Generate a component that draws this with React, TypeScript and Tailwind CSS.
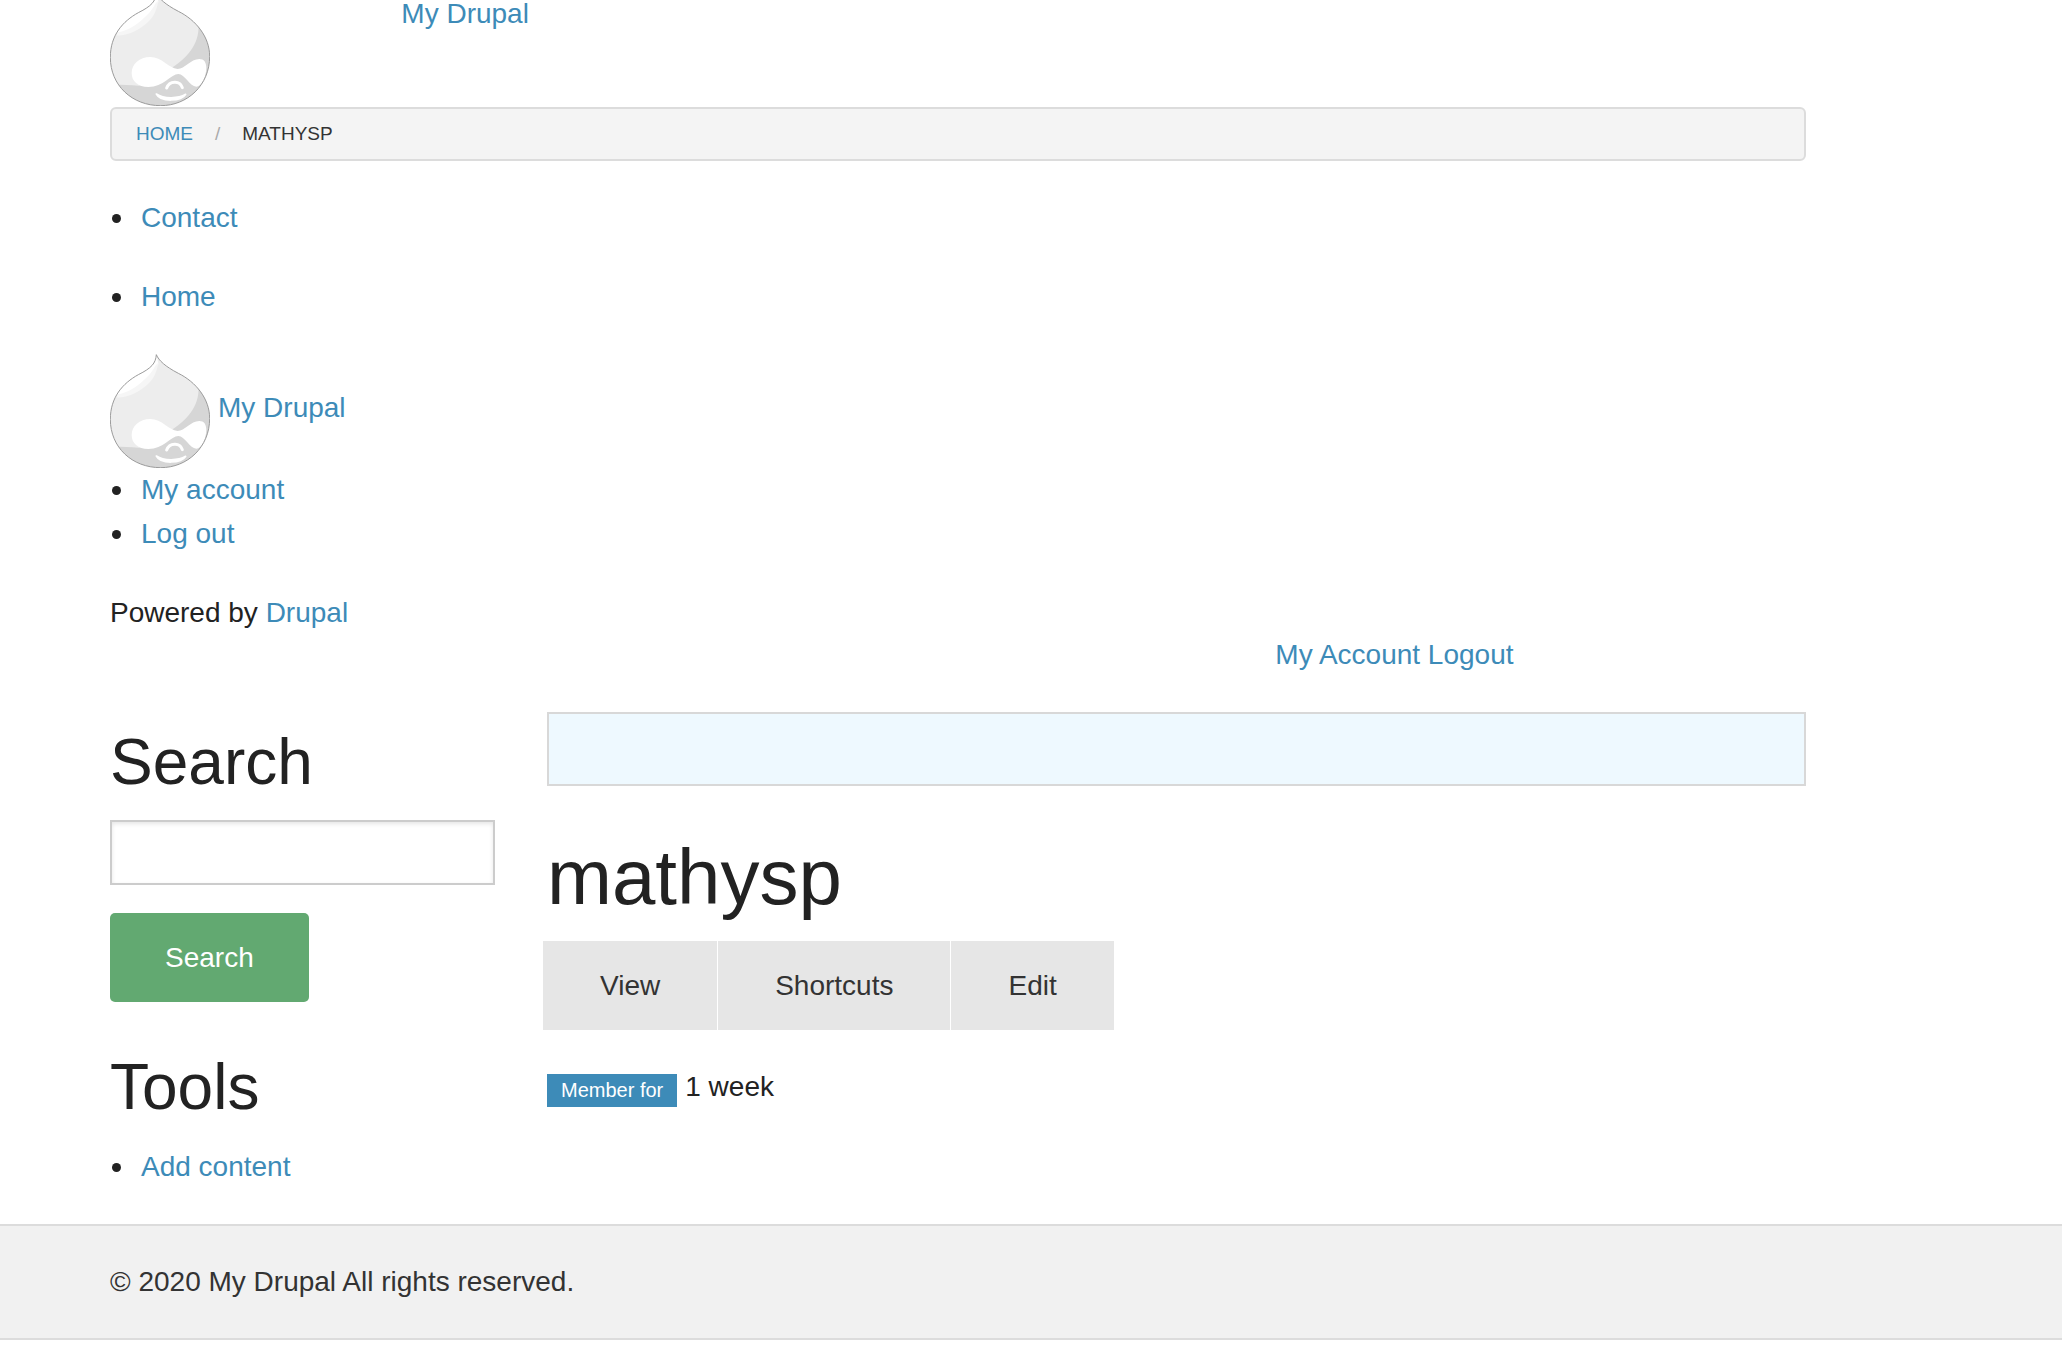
import React from 'react';

const linkClass = 'text-[#3d8bb8] hover:text-[#2b7aa6]';

const dropPath =
  'M139 2C147 20 165 37 205 58C258 84 299 135 299 193C299 280 232 341 152 341C66 341 1 280 1 196C1 130 38 88 85 62C125 42 137 28 139 2Z';

function DropLogo({ id }: { id: string }) {
  return (
    <svg viewBox="0 0 300 342" className="w-[100px] h-[114px] shrink-0" role="img" aria-label="Home">
      <defs>
        <clipPath id={id}>
          <path d={dropPath} />
        </clipPath>
      </defs>
      <g clipPath={`url(#${id})`}>
        <rect width="300" height="342" fill="#ededed" />
        <path d="M264 88C274 150 234 196 188 226L150 270L86 281C60 280 36 279 16 277L16 342L300 342L300 88Z" fill="#d6d6d6" />
        <path d="M139 0L146 30C139 40 142 62 118 86C92 112 54 132 20 130L0 60L60 0Z" fill="#f6f6f6" />
        <path d="M139 0L144 28C134 32 134 48 112 68C88 92 58 116 22 121L0 60L60 0Z" fill="#ffffff" />
      </g>
      <path
        d="M65 243C65 216 88 195 121 195C156 195 176 229 203 231C224 231 242 201 268 201C282 201 289 211 289 228C289 252 275 284 259 284C240 284 224 246 205 246C184 246 160 285 115 285C84 285 65 268 65 243Z"
        fill="#ffffff"
      />
      <path d="M170 288C178 266 210 264 217 287" fill="none" stroke="#ffffff" strokeWidth="9" strokeLinecap="round" />
      <path d="M139 306C162 322 206 320 227 307C214 329 152 331 139 306Z" fill="#ffffff" stroke="#ffffff" strokeWidth="5" strokeLinejoin="round" />
      <path d={dropPath} fill="none" stroke="#9b9b9b" strokeWidth="3" />
    </svg>
  );
}

function LinkList({ items }: { items: string[] }) {
  return (
    <ul className="pl-0.5">
      {items.map((item) => (
        <li
          key={item}
          className="flex items-center before:content-[''] before:w-[9px] before:h-[9px] before:mr-5 before:rounded-full before:bg-[#222]"
        >
          <a href="#" className={linkClass}>{item}</a>
        </li>
      ))}
    </ul>
  );
}

export default function App() {
  const tabs = ['View', 'Shortcuts', 'Edit'];

  return (
    <div className="bg-white text-[#222] text-[28px] leading-[44px] font-['Helvetica_Neue','Liberation_Sans',sans-serif]">
      <div className="ml-[84px] max-w-[1748px]">
        {/* HEADER */}
        <header className="grid grid-cols-12 -mt-2">
          <div className="col-span-2 px-[26px]">
            <a href="#" className="block h-[115px]"><DropLogo id="drop-header" /></a>
          </div>
          <div className="col-span-10 px-[26px] pt-2 leading-7">
            <a href="#" className={linkClass}>My Drupal</a>
          </div>
        </header>

        <div className="px-[26px]">
          <nav aria-label="Breadcrumb">
            <ol className="flex items-center h-[54px] px-6 rounded-md border-2 border-[#dcdcdc] bg-[#f4f4f4] text-[19px] leading-[20px] uppercase">
              <li><a href="#" className={linkClass}>Home</a></li>
              <li aria-hidden="true" className="px-[22px] text-[#aaa]">/</li>
              <li className="text-[#333]">mathysp</li>
            </ol>
          </nav>

          <div className="flex flex-col gap-[35px] pt-[35px]">
            <LinkList items={['Contact']} />
            <LinkList items={['Home']} />
            <div>
              <div className="flex gap-2">
                <a href="#"><DropLogo id="drop-branding" /></a>
                <a href="#" className={`${linkClass} pt-8`}>My Drupal</a>
              </div>
              <LinkList items={['My account', 'Log out']} />
            </div>
            <p>
              Powered by <a href="#" className={linkClass}>Drupal</a>
            </p>
          </div>
        </div>

        <div className="grid grid-cols-12">
          <div className="col-start-9 col-span-4 px-[26px] -mt-0.5">
            <a href="#" className={linkClass}>My Account</a>{' '}
            <a href="#" className={linkClass}>Logout</a>
          </div>
        </div>

        <div className="grid grid-cols-12 pt-[35px] pb-[35px]">
          {/* SIDEBAR */}
          <aside className="col-span-3 px-[26px]">
            <h2 className="pt-[5px] text-[64px] leading-[91px]">Search</h2>
            <form className="pt-3" onSubmit={(e) => e.preventDefault()}>
              <input
                type="search"
                aria-label="Search"
                className="block w-full h-[65px] px-4 border-2 border-[#ccc] bg-white shadow-[inset_0_2px_4px_rgba(0,0,0,0.1)]"
              />
              <button type="submit" className="mt-7 h-[89px] px-[55px] rounded-[5px] bg-[#62a971] text-white">
                Search
              </button>
            </form>
            <h2 className="pt-10 text-[64px] leading-[91px]">Tools</h2>
            <div className="pt-3">
              <LinkList items={['Add content']} />
            </div>
          </aside>

          {/* MAIN */}
          <main className="col-span-9 px-[26px]">
            <div className="h-[74px] border-2 border-[#d8d8d8] bg-[#eef9ff]" />
            <h1 className="pt-[38px] text-[78px] leading-[107px]">mathysp</h1>
            <nav className="flex mt-[10px] -ml-1 gap-px" aria-label="Tabs">
              {tabs.map((tab) => (
                <a key={tab} href="#" className="h-[89px] px-[57px] flex items-center bg-[#e6e6e6] text-[#333]">
                  {tab}
                </a>
              ))}
            </nav>
            <div className="flex gap-2 pt-[35px]">
              <span className="mt-[9px] h-[33px] px-3.5 bg-[#3d8bb8] text-white text-[20px] leading-[33px]">Member for</span>
              <span>1 week</span>
            </div>
          </main>
        </div>
      </div>

      <footer className="border-y-2 border-[#dcdcdc] bg-[#f1f1f1] text-[#333] py-[34px] px-[110px]">
        <p>© 2020 My Drupal All rights reserved.</p>
      </footer>
    </div>
  );
}
